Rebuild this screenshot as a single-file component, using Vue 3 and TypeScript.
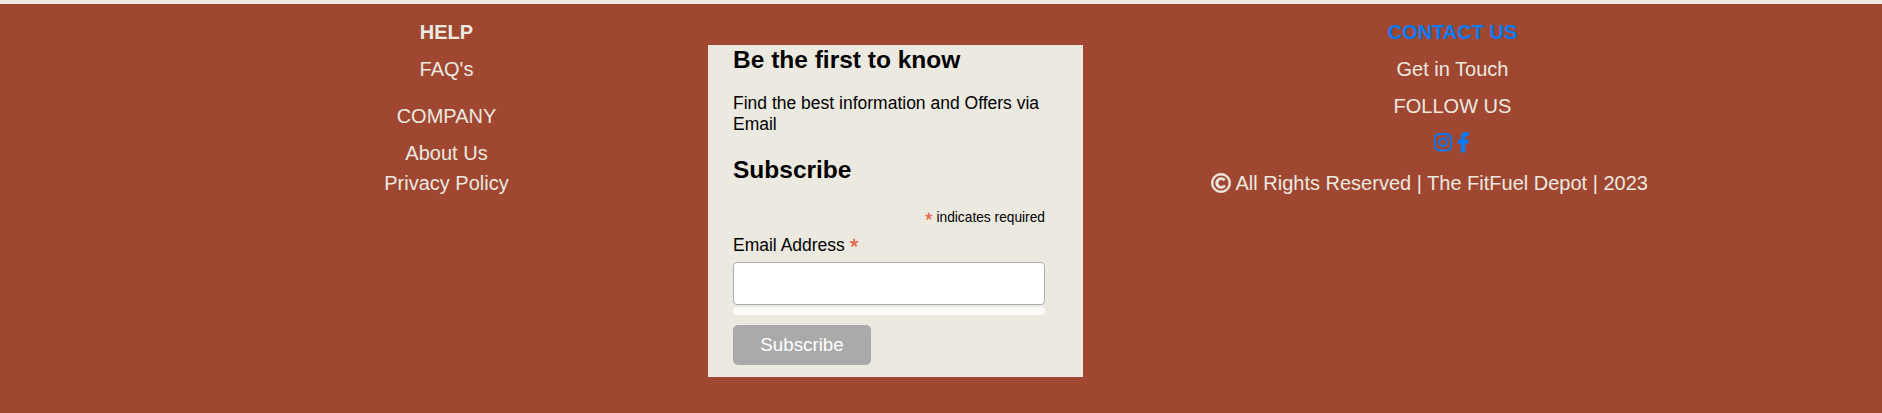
<script setup lang="ts">
import { ref } from 'vue'

const email = ref<string>('')
</script>

<template>
  <footer class="footer">
    <nav class="column">
      <strong class="item">HELP</strong>
      <a class="item faq">FAQ's</a>
      <span class="item">COMPANY</span>
      <a class="item about">About Us</a>
      <a class="item">Privacy Policy</a>
    </nav>

    <form class="signup" @submit.prevent>
      <h2 class="title">Be the first to know</h2>
      <p class="intro">Find the best information and Offers via Email</p>
      <h2 class="title subscribe-title">Subscribe</h2>
      <div class="required"><span class="asterisk small">*</span> indicates required</div>
      <label class="label" for="email">Email Address <span class="asterisk big">*</span></label>
      <input id="email" v-model="email" class="field" type="email" />
      <div class="response"></div>
      <button class="submit" type="submit">Subscribe</button>
    </form>

    <section class="column">
      <strong class="item contact">CONTACT US</strong>
      <a class="item">Get in Touch</a>
      <span class="item">FOLLOW US</span>
      <div class="item social">
        <svg class="instagram" viewBox="0 0 448 512" fill="currentColor" stroke="currentColor" stroke-width="6">
          <path d="M224.1 141c-63.6 0-114.9 51.3-114.9 114.9s51.3 114.9 114.9 114.9S339 319.5 339 255.900 287.700 141 224.100 141zm0 189.600c-41.100 0-74.700-33.500-74.700-74.700s33.500-74.700 74.700-74.700 74.700 33.500 74.700 74.700-33.600 74.700-74.700 74.700zm146.400-194.300c0 14.900-12 26.800-26.800 26.800-14.900 0-26.800-12-26.800-26.800s12-26.800 26.800-26.800 26.800 12 26.800 26.800zm76.100 27.200c-1.700-35.900-9.900-67.700-36.200-93.900-26.200-26.200-58-34.400-93.900-36.200-37-2.100-147.900-2.100-184.900 0-35.800 1.700-67.600 9.900-93.900 36.100s-34.400 58-36.200 93.900c-2.100 37-2.100 147.900 0 184.900 1.700 35.900 9.900 67.700 36.200 93.900s58 34.400 93.900 36.200c37 2.100 147.900 2.100 184.900 0 35.900-1.700 67.700-9.900 93.900-36.200 26.200-26.200 34.400-58 36.200-93.900 2.100-37 2.100-147.800 0-184.800zM398.800 388c-7.800 19.600-22.900 34.700-42.600 42.600-29.500 11.700-99.500 9-132.100 9s-102.700 2.600-132.100-9c-19.600-7.800-34.700-22.900-42.600-42.600-11.700-29.500-9-99.500-9-132.100s-2.600-102.700 9-132.100c7.800-19.600 22.900-34.700 42.600-42.600 29.500-11.700 99.500-9 132.100-9s102.700-2.600 132.100 9c19.600 7.800 34.700 22.900 42.600 42.600 11.700 29.500 9 99.500 9 132.100s2.700 102.700-9 132.100z" />
        </svg>
        <svg class="facebook" viewBox="0 0 320 512" fill="currentColor" stroke="currentColor" stroke-width="10">
          <path d="M279.140 288l14.220-92.660h-88.910v-60.130c0-25.350 12.420-50.060 52.240-50.060h40.420V6.260S260.430 0 225.360 0c-73.220 0-121.080 44.380-121.080 124.720v70.620H22.890V288h81.390v224h100.170V288z" />
        </svg>
      </div>
      <div class="item copyright">
        <svg class="copy-icon" viewBox="0 0 512 512" fill="currentColor" stroke="currentColor" stroke-width="14">
          <path d="M256 8C119.033 8 8 119.033 8 256s111.033 248 248 248 248-111.033 248-248S392.967 8 256 8zm0 448c-110.532 0-200-89.451-200-200 0-110.531 89.451-200 200-200 110.532 0 200 89.451 200 200 0 110.532-89.451 200-200 200zm107.351-101.064c-9.614 9.712-45.530 41.396-104.065 41.396-82.430 0-140.484-61.425-140.484-141.567 0-79.152 60.275-139.401 139.762-139.401 55.531 0 88.738 26.620 97.593 34.779a11.965 11.965 0 0 1 1.936 15.322l-18.155 28.113c-3.841 5.950-11.966 7.282-17.499 2.921-8.595-6.776-31.814-22.538-61.708-22.538-48.303 0-77.916 35.330-77.916 80.082 0 41.589 26.888 83.692 78.277 83.692 32.657 0 56.843-19.039 65.726-27.225 5.270-4.857 13.596-4.039 17.820 1.738l19.865 27.170a11.947 11.947 0 0 1-1.152 15.518z" />
        </svg>
        <span>All Rights Reserved | The FitFuel Depot | 2023</span>
      </div>
    </section>
  </footer>
</template>

<style>
body {
  background: #9f4731;
}
</style>

<style scoped>
.footer {
  box-sizing: border-box;
  display: grid;
  grid-template-columns: 523px 375px 739px;
  align-items: start;
  height: 413px;
  padding: 13px 0 0 185px;
  border-top: 4px solid #ece9e0;
  background: #9f4731;
  color: #ece9e0;
  font-family: 'Liberation Sans', Arial, sans-serif;
  font-size: 20px;
  line-height: 30px;
}
.column {
  display: flex;
  flex-direction: column;
  align-items: center;
}
.item {
  margin-bottom: 7px;
  white-space: nowrap;
}
.faq {
  margin-bottom: 17px;
}
.about {
  margin-bottom: 0;
}
.contact {
  color: #007bff;
}
.social {
  display: flex;
  align-items: center;
  gap: 5px;
  height: 29px;
  margin-right: 1px;
  margin-bottom: 11px;
  color: #007bff;
}
.instagram {
  width: 18px;
  height: 20.5px;
}
.facebook {
  width: 12.5px;
  height: 20.5px;
}
.copyright {
  display: flex;
  align-items: center;
  gap: 4.5px;
  margin-right: 46px;
}
.copy-icon {
  width: 20px;
  height: 20px;
}
.signup {
  box-sizing: border-box;
  display: flex;
  flex-direction: column;
  height: 332px;
  margin-top: 28px;
  padding: 0 38px 0 25px;
  background: #ece9e0;
  color: #000;
  font-size: 17.5px;
  line-height: 21px;
}
.title {
  margin: 0;
  font-size: 24.5px;
  font-weight: 700;
  line-height: 29px;
}
.intro {
  margin: 19px 0 18px;
}
.subscribe-title {
  margin-top: 2px;
}
.required {
  height: 18px;
  margin-top: 25px;
  font-size: 13.75px;
  line-height: 18px;
  text-align: right;
}
.asterisk {
  color: #e85c41;
  -webkit-text-stroke: 0.3px #e85c41;
}
.small {
  margin-right: 0.5px;
  font-size: 18px;
  line-height: 0;
  vertical-align: -4px;
}
.big {
  font-size: 22.5px;
  line-height: 0;
  vertical-align: -3px;
}
.label {
  height: 21px;
  margin-top: 8px;
}
.field {
  box-sizing: border-box;
  flex: none;
  width: 100%;
  height: 43px;
  margin: 6px 0 2px;
  padding: 0 10px;
  border: 1px solid #abb0b2;
  border-radius: 4px;
  outline: 0;
  background: #fff;
  font: inherit;
}
.response {
  flex: none;
  height: 8px;
  border-radius: 4px;
  background: #fcfbf9;
}
.submit {
  flex: none;
  width: 138px;
  height: 40px;
  margin-top: 10px;
  padding: 0;
  border: 0;
  border-radius: 5px;
  background: #aaa;
  color: #fff;
  font-family: inherit;
  font-size: 18.75px;
}
</style>
